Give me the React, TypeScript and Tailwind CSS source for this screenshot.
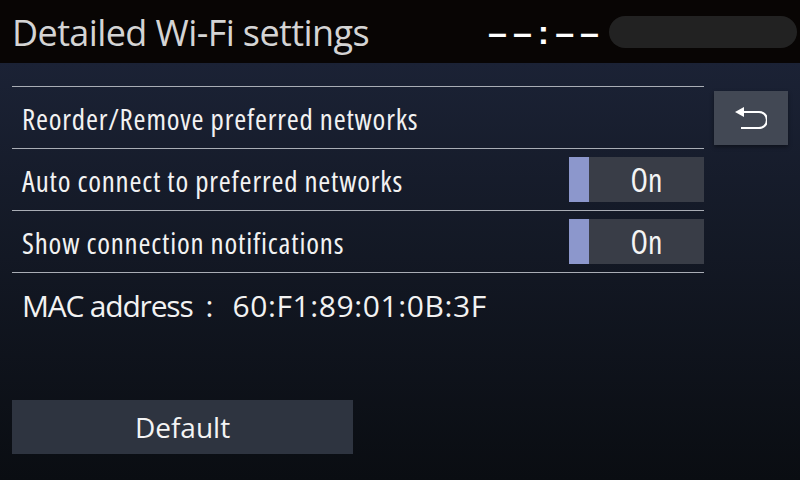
import React from "react";

const font = "font-['Open_Sans','Noto_Sans',sans-serif]";

function Toggle({ on }: { on: boolean }) {
  return (
    <div className="flex h-[45px] w-[135px] bg-[#393d47]">
      <div className="w-[20px] bg-[#8c97cc]" />
      <div className="flex flex-1 items-center justify-center text-[32px] text-[#f4f4f4] [font-stretch:75%]">
        {on ? "On" : "Off"}
      </div>
    </div>
  );
}

function Row({ label, children }: { label: string; children?: React.ReactNode }) {
  return (
    <div className="flex h-[62px] items-center justify-between border-t border-[#a9adb5] pl-[10px]">
      <span className="pt-[3px] text-[29px] tracking-[0.8px] text-[#f2f2f2] [font-stretch:75%]">{label}</span>
      {children}
    </div>
  );
}

export default function App() {
  return (
    <div className={`flex h-[480px] w-[800px] flex-col overflow-hidden ${font}`}>
      {/* header */}
      <div className="flex h-[63px] items-center bg-[#080504] pl-[12px] pr-[3px]">
        <h1 className="flex-1 pt-[2px] text-[36px] leading-none tracking-[-0.6px] text-[#d4d4d4]">
          Detailed Wi-Fi settings
        </h1>
        <span className="mr-[4px] font-['Liberation_Sans',sans-serif] text-[34px] font-bold leading-none tracking-[6px] text-white">
          ––:––
        </span>
        <div className="h-[32px] w-[188px] rounded-full bg-[#222222]" />
      </div>

      {/* body */}
      <div className="flex-1 bg-gradient-to-b from-[#1b2235] to-[#0a0d12] px-[12px] pt-[23px]">
        <div className="flex">
          <div className="w-[692px]">
            <Row label="Reorder/Remove preferred networks" />
            <Row label="Auto connect to preferred networks">
              <Toggle on />
            </Row>
            <Row label="Show connection notifications">
              <Toggle on />
            </Row>
            <div className="flex h-[62px] items-center border-t border-[#a9adb5] pl-[10px] pt-[3px] text-[30px] text-[#f2f2f2]">
              <span className="tracking-[-1.2px]">MAC address</span>
              <span className="ml-[13px]">:</span>
              <span className="ml-[19px] tracking-[0.6px]">60:F1:89:01:0B:3F</span>
            </div>
          </div>
          <button className="ml-[10px] mt-[5px] flex h-[54px] w-[74px] items-center justify-center bg-[#424854] shadow-[0_2px_4px_rgba(0,0,0,0.4)]">
            <svg width="32" height="22" viewBox="0 0 32 22" fill="none">
              <polygon points="0,5 9,0 9,10" fill="#fff" />
              <path d="M8 5 H24 A8 8 0 0 1 24 21 H6" stroke="#fff" strokeWidth="2.2" />
            </svg>
          </button>
        </div>
        <button className="mt-[66px] flex h-[54px] w-[341px] items-center justify-center bg-[#2e3440] text-[28px] text-[#f4f4f4]">
          Default
        </button>
      </div>
    </div>
  );
}
